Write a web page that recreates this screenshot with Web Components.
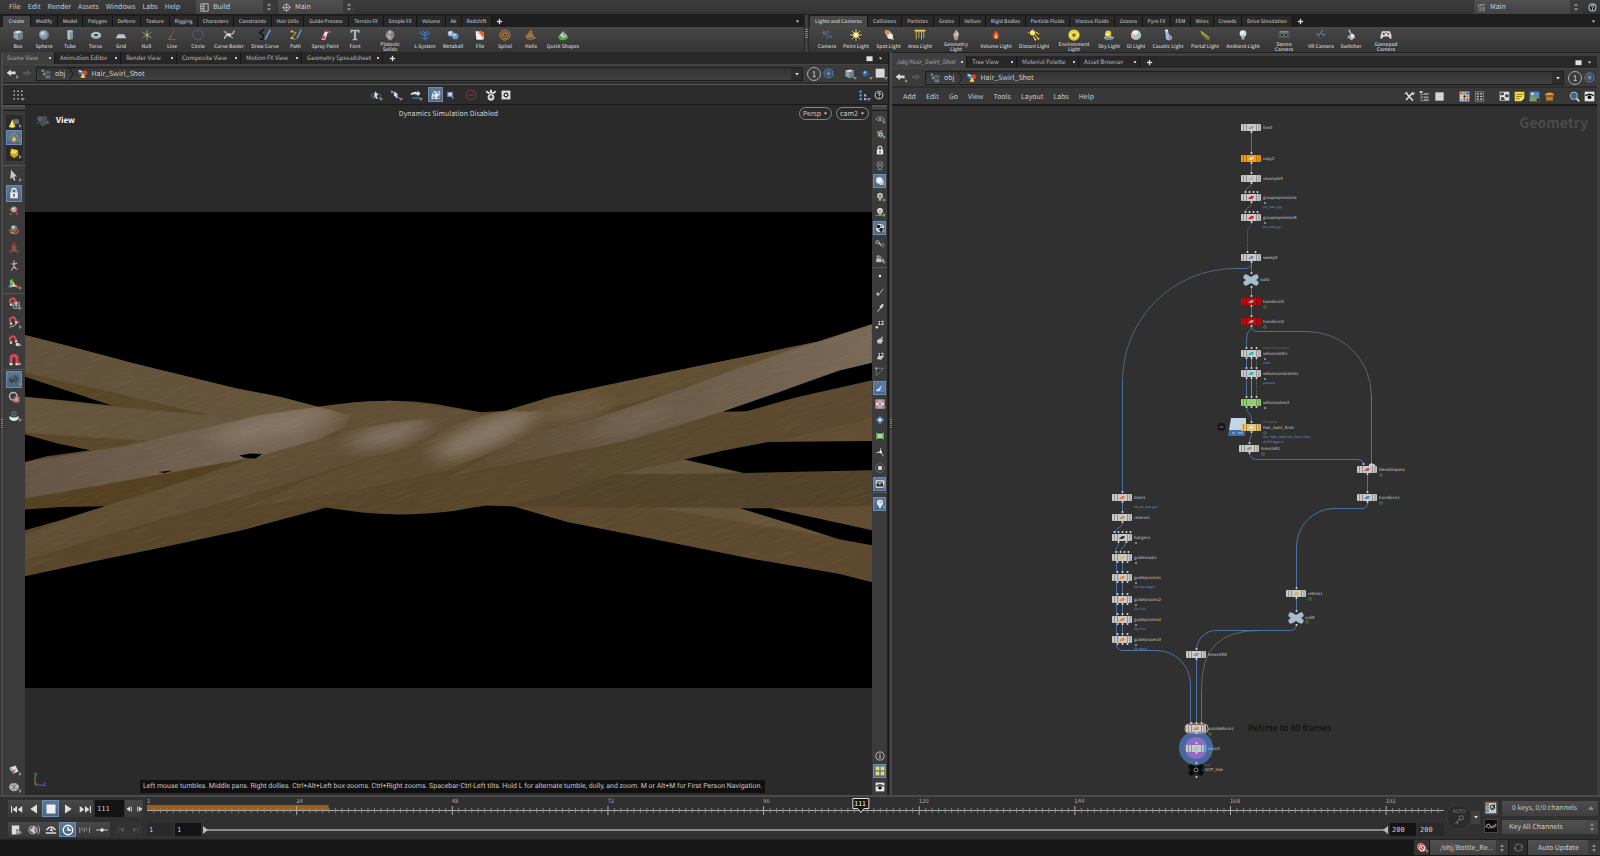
<!DOCTYPE html>
<html lang="en">
<head>
<meta charset="utf-8">
<title>Hair_Swirl_Shot</title>
<style>
html,body{margin:0;height:100%;background:#181818}
body{display:flex;flex-direction:column;font:7px/10px "Noto Sans CJK JP","Noto Sans",sans-serif;color:#c8c8c8;overflow:hidden;text-rendering:geometricPrecision}
main{flex:1;min-height:0;display:grid;grid-template-columns:3px 886fr 3px 708fr;grid-template-rows:100%;background:#4a4a4a}
.shelves{display:grid;grid-template-columns:804fr 5px 791fr;height:37px;flex:none}
</style>
</head>
<body>
<app-menu></app-menu>
<div class="shelves">
  <tool-shelf kind="create"></tool-shelf>
  <drag-grip></drag-grip>
  <tool-shelf kind="lights"></tool-shelf>
</div>
<main>
  <drag-grip side></drag-grip>
  <scene-pane></scene-pane>
  <drag-grip side></drag-grip>
  <network-pane></network-pane>
</main>
<play-bar></play-bar>
<status-bar></status-bar>
<script>
const define = (tag, css, html) => customElements.define(tag, class extends HTMLElement {
  constructor() {
    super();
    const root = this.attachShadow({mode: 'open'});
    const t = document.createElement('template');
    t.innerHTML = `<style>*{box-sizing:border-box}button,input,select{font:inherit;color:inherit;text-rendering:inherit;margin:0;border:0;padding:0;background:none;border-radius:0;outline:0}:host{box-sizing:border-box}${css}</style>` + (typeof html === 'function' ? html(this) : html);
    root.append(t.content.cloneNode(true));
  }
});

/* ---------- icons, 16-unit grid ---------- */
const L = (d, c = '#ddd', w = 1.4) => `<path d="${d}" fill="none" stroke="${c}" stroke-width="${w}"/>`;
const P = (d, c = '#ddd') => `<path d="${d}" fill="${c}"/>`;
const C = (x, y, r, c = '#ddd') => `<circle cx="${x}" cy="${y}" r="${r}" fill="${c}"/>`;
const O = (x, y, r, c = '#ddd', w = 1.2) => `<circle cx="${x}" cy="${y}" r="${r}" fill="none" stroke="${c}" stroke-width="${w}"/>`;
const R = (x, y, w, h, c = '#ddd') => `<rect x="${x}" y="${y}" width="${w}" height="${h}" fill="${c}"/>`;
const rays = (c, a = 3.5, b = 7.5, n = 8) => { let s = ''; for (let i = 0; i < n; i++) { const t = i * 2 * Math.PI / n; s += `M${8 + a * Math.cos(t)} ${8 + a * Math.sin(t)}L${8 + b * Math.cos(t)} ${8 + b * Math.sin(t)}`; } return L(s, c, 1.3); };
const magnet = `<g transform="rotate(-15 6 6)">` + L('M3 10V5q0-3 3.500-3T10 5v5', '#cf4a50', 3) + R(1.500, 8.500, 3, 2.500) + R(8.500, 8.500, 3, 2.500) + '</g>';
const cam = P('M1 8l4-4 3 1 4-2 2 5-3 5-7 0z', '#252d31') + C(4.500, 5.500, 2.600, '#4b575d') + C(10, 5, 2.600, '#3a464b') + O(4.500, 5.500, 2.200, '#77848a', .8) + O(10, 5, 2.200, '#6b777d', .8) + C(8, 10.500, 3, '#39454b') + O(8, 10.500, 2.400, '#66737a', .8) + C(13, 9.500, 2, '#566268') + C(2.500, 10, 1.500, '#444f55');
const bulb = (c, d = '#555') => C(8, 6, 4.5, c) + R(6, 10, 4, 4, '#aaa') + L('M6 6l2 3 2-3', d, .8);
const ICONS = {
  box: P('M2 4l7-2 5 2v9l-6 2-6-3z', '#8ea0ac') + P('M2 4l7-2 5 2-6 2z', '#d6e0e6') + P('M8 6l6-2v9l-6 2z', '#6d7f8b'),
  sphere: C(8, 8, 6.6, '#6f8391') + C(7, 7, 5, '#8fa1ad') + C(6, 5.5, 2.6, '#c5d2da'),
  tube: P('M4 3v10q4 3 8 0V3z', '#7d929f') + P('M5.5 3v11h2V3z', '#b9c8d1') + `<ellipse cx="8" cy="3" rx="4" ry="1.6" fill="#a6bac6"/>`,
  torus: `<ellipse cx="8" cy="8.5" rx="7" ry="4.8" fill="#8ea2af"/><ellipse cx="8" cy="7.6" rx="6" ry="3.4" fill="#b6c4cd"/><ellipse cx="8" cy="8" rx="3" ry="1.5" fill="#34393d"/>`,
  grid: P('M4 7h8l3 5H1z', '#bfc4c9') + P('M1 12h14v1H1z', '#6d7479'),
  null: L('M8 1v14', '#3ea34b', 1.8) + L('M2 4l12 8', '#d4573a', 1.8) + L('M2 12l12-8', '#3b76c4', 1.8) + C(8, 8, 2, '#dda13a'),
  line: L('M3 14L12 1', '#9a4040', 1.4) + L('M3 14h10', '#6b7076', 1) + L('M4 14A7 7 0 0 0 7 9', '#6b7076', 1),
  circle: O(8, 8, 6.6, '#4f6a8a', 1.2),
  bezier: L('M1 3L13 12', '#8fb4e0', 1.4) + L('M2 13q2-7 7-6t6-5', '#ddd', 1.5) + R(6, 6, 4, 4, '#d5dbe2') + C(3, 4, 1.5, '#d97a3a'),
  draw: L('M1 13q5 2 5-2T2 6t5-5', '#151515', 2) + L('M15 1L8 14', '#5b9be0', 2.2),
  path: L('M2 3l6 2-6 7 5 2', '#b6a53c', 1.4) + L('M15 1L9 13', '#5b9be0', 2) + R(1, 2, 2.5, 2.5, '#e6d23e') + R(1, 11, 2.5, 2.5, '#e6d23e'),
  spray: P('M8 3l4 1-4 11-5-1z', '#e3e3e3') + P('M5 8l4 2-2 4-4-1z', '#d5454c') + P('M9 1l3 1v2l-4-1z', '#b8393f') + C(14, 4, 1.4, '#e26a6a'),
  font: P('M2 1h12v4h-1.500l-1-2H9.500v10l2 1v1h-7v-1l2-1V3H4.500l-1 2H2z', '#a9bac6'),
  platonic: P('M8 1l5 3 1 5-4 6H6L2 9l1-5z', '#8d8d8d') + P('M8 1l2 6H5zM3 10l5-2 1 5z', '#c5c5c5') + L('M3 4l10 5M13 4L4 12', '#6c6c6c', .8),
  lsystem: L('M8 15V4M8 10L3 6M8 10l5-4M8 7L5 2M8 7l3-5M3 6H1M3 6V3M13 6h2M13 6V3M8 13l-5-1M8 13l5-1', '#3674c0', 1.5),
  metaball: C(5, 6, 3.8, '#9cb7dc') + C(11, 9.500, 4.2, '#6f97cf') + C(4, 5, 1.6, '#e6eef8') + C(10, 8, 1.6, '#d5e2f4') + L('M7 7l2 1', '#9cb7dc', 2.5),
  file: P('M2 3h5l1 2h5v9H3z', '#e8e3da') + P('M8 2l6 3-2 6-5-4z', '#e8662b') + P('M3 7h6l2 7H4z', '#f6f2ec'),
  spiral: O(8, 8, 6.8, '#c5813f', 1.2) + O(8, 8.400, 4.600, '#c5813f', 1.2) + O(8, 8, 2.300, '#c5813f', 1.2),
  helix: L('M8 1l-1.500 3q3 2 3-.5-4-1-5 3 2 3 6 .5-6-2-9 2 3 4 10 .5Q4 7 1 11q4 5 13 1-5-3-12-1', '#c5813f', 1.2),
  quick: P('M3 9l5-6 5 5v4H4z', '#c4c9c4') + P('M1 10l4-1 3 3 6-3 1 3-5 3H4z', '#4dae30') + P('M8 3l5 5-5 1z', '#8e948e'),
  camera: cam,
  point: rays('#ebcf4d', 4, 7.8) + C(8, 8, 3.600, '#fff2a8'),
  spot: P('M3 5l5-3 5 5-2 6-5-1z', '#b9b9b9') + C(5, 4, 3, '#e08a3a') + C(10, 10, 3.400, '#eee') + P('M11 9l4 5h-4z', '#f0da58'),
  area: R(1, 1, 14, 2.500, '#f1d565') + L('M3 4v10M6.500 4v8M10 4v10M13 4v8', '#d8b649', 1.2),
  geolight: P('M8 1l4 6-2 8H6L4 7z', '#a98cab') + C(8, 8, 2.600, '#f0b95d') + P('M8 1l4 6H9z', '#d8d3da'),
  volume: P('M4 2h8l2 4-1 8H3L2 6z', '#5b3c3c') + P('M8 2q5 5 3 10-3 3-6 0Q3 8 8 2z', '#e5532b') + P('M8 6q3 4 1 7-3 0-3-3z', '#f8c14a'),
  distant: C(6, 5, 3.400, '#ffe873') + L('M9 7l5 6M7 9l3 6M10 4l5 3M2 5H0M6 1V0', '#e8c440', 1.4) + C(14, 13, 1.300, '#f5d65a') + C(10, 14, 1.200, '#f5d65a'),
  environment: C(8, 8, 7.500, '#e9ce3a') + L('M2 8q6-6 12 0-6 6-12 0z', '#fff7c9', 1.2) + C(8, 8, 2.500, '#867322'),
  sky: C(7, 6, 4, '#ecd04c') + P('M1 12q1-4 5-2 3-4 6 0 3 0 3 2-3 3-7 2-5 1-7-2z', '#c9a53e') + P('M1 12h14q-3 3-7 2-5 1-7-2z', '#4f92b4') + P('M2 8l4-2 2 3z', '#fff'),
  gi: C(8, 8, 6.800, '#b9c8bb') + C(7, 6, 4, '#efe9e7') + C(11, 9, 3, '#a5cbb4') + C(5, 10, 3, '#d4b7bb'),
  caustic: P('M4 1h4l1 6 4 3q2 3-2 5-7 1-6-6z', '#a9b9dc') + P('M4 1h4v2H4z', '#e9eefb') + P('M8 9l5 2q1 3-3 4z', '#7f93c2'),
  portal: P('M2 2l12 9v4l-4-1L3 7z', '#76801f') + P('M2 2l12 9v1L3 5z', '#b9b947'),
  ambient: bulb('#c9dfe6', '#9fb9c4') + C(6.500, 4.500, 2, '#f3fbff'),
  stereo: R(1, 4, 14, 8, '#53575a') + C(5, 8, 3, '#22282b') + C(11, 8, 3, '#22282b') + O(5, 8, 2.300, '#aaa', .8) + O(11, 8, 2.300, '#aaa', .8) + R(2, 3, 12, 1.500, '#9ea3a6'),
  vr: P('M1 9l7-4 6 4-6 4z', '#47545b') + L('M2 6q5 4 11 1M10 1l-4 8', '#6f93ad', 1.3) + C(8, 9, 2, '#2a3235'),
  switcher: L('M5 1l4 7', '#ccc', 1.800) + P('M4 9l6-2 4 4-5 4-5-3z', '#b8b8b8') + C(10, 9, 2.600, '#e6e6e6') + C(5, 11, 2, '#8e8e8e'),
  gamepad: P('M3 3h10q3 4 2.500 9-2 3-4-2h-7q-2 5-4 2Q0 7 3 3z', '#dcdcdc') + C(5, 6.500, 1.600, '#555') + C(11, 6.500, 1.600, '#b3542c') + R(7, 4, 2, 1.500, '#777'),
  back: P('M1 7l6-5v3h7v4H7v3z', '#d9d9d9'), fwd: P('M15 7L9 2v3H3v4h6v3z', '#555'),
  obj: R(1, 1, 4, 4, '#7e8a8f') + R(7, 3, 8, 5, '#56646b') + R(3, 6, 4, 4, '#8b979c') + R(7, 10, 8, 5, '#66757c') + L('M3 4v9h4', '#444', 1),
  geo: P('M1 1l6 2v7L1 8z', '#4277b5') + C(11, 6, 4, '#d34131') + P('M8 6l4 7q-4 3-8 0z', '#f1c93b') + P('M1 1l6 2V6L1 4z', '#c6d5e8'),
  one: O(8, 8, 7.400, '#bbb', 1) + L('M6.500 6L8.300 5v6M6.500 11h3.600', '#ccc', 1),
  target: O(8, 8, 6.500, '#5480b8', 1.500) + O(8, 8, 3.700, '#5480b8', 1.300) + C(8, 8, 1.800, '#8bb2e2'),
  ball: C(8, 8, 4.500, '#2d62aa') + C(7, 6.500, 1.800, '#9dc0ec'),
  square: R(1, 1, 13, 13, '#d8d8d8'), help: C(8, 8, 7, '#d5dde0') + C(8, 8, 5.500, '#22282b') + L('M6 6.500Q6 4.500 8 4.500t2 2Q10 8 8 8.500V10M8 11v1.500', '#eee', 1.500),
  dots: [2, 7, 12].map(y => [2, 7, 12].map(x => R(x, y, 2, 2, '#bbb')).join('')).join(''),
  tumble: `<ellipse cx="8" cy="9" rx="6.500" ry="3" fill="none" stroke="#4f79ad" stroke-width="1.300"/>` + P('M7 3l4 5-2 1 1 4-2 0-1-3-2 1z', '#ddd'),
  pan: L('M2 3l11 10', '#4f79ad', 1.800) + P('M6 3l5 5-2 .5 1 3.500-2 0-1-3-2 1z', '#ddd') + P('M1 2l4 1-3 3z', '#7fa6d6'),
  dolly: P('M1 6q6-4 9-1V2l4 4-4 4V8Q6 6 1 8z', '#ddd') + L('M3 12h11', '#4f79ad', 1.800),
  orbit: P('M3 6l3-4 3 2 4-2 1 5-2 2 1 4-4 1-3-1-4 1 0-4z', '#cfd6dc') + C(6, 6, 1.500, '#6b7f93') + C(11, 5, 1.200, '#6b7f93') + C(5, 11, 1.200, '#6b7f93') + C(11, 11, 1.500, '#6b7f93') + L('M8 6v5M6 8h5', '#fff', 1),
  focus: R(2, 3, 9, 8, '#7f93b3') + R(4, 5, 5, 4, '#dde7f6') + P('M9 9l4 5-3-1z', '#bbb'),
  stop: O(8, 8, 6.500, '#713a3a', 1.500) + R(4.500, 6.500, 7, 3, '#633'),
  fan: C(8, 11, 4.500, '#dcdcdc') + C(8, 10.500, 2.200, '#46525a') + P('M6.500 6h3V1h-3zM5 7L1 4l1-2 5 3zM11 7l4-3-1-2-5 3z', '#ddd'),
  render: R(1, 1, 14, 14, '#e2e2e2') + rays('#222', 2.500, 5, 8) + O(8, 8, 2.800, '#222', 1.500),
  bars: R(2, 2, 3, 3, '#7295c4') + R(2, 7, 3, 3, '#7295c4') + R(2, 12, 3, 3, '#7295c4') + R(8, 7, 3, 3, '#9db4d3') + R(8, 12, 3, 3, '#9db4d3') + R(13, 12, 2, 3, '#9db4d3'),
  cone: P('M6 3l4 10q-4 3-9 0z', '#f0c83b') + C(11, 6, 3.800, '#6a6f72') + P('M6 3l1 10H3z', '#fbe48a'),
  geos: L('M8 1L1 8l7 6 7-6zM4 5l8 7M12 5l-8 7', '#b4a05a', 1) + P('M8 6l3 4-3 3-3-3z', '#e9c349'),
  comp: P('M4 2l9 2 1 7-6 4-5-4z', '#c9a518') + P('M5 3l8 2-4 5-6-2z', '#f4d84a'),
  cursor: P('M4 1l8 9H8l2 5-2 .5L6 11l-3 2.500z', '#c9c9c9'),
  lock: R(3, 7, 10, 8, '#ececec') + L('M5 7V5q0-3 3-3t3 3v2', '#ececec', 1.700) + R(7, 9, 2, 4, '#555'),
  move: C(8, 6, 4, '#98a4aa') + P('M1 13l4-3 1 3zM15 12l-4-3-1 4zM1 6l3-2v4zM14 5l-3-1v3z', '#d23c30') + C(7, 5, 1.500, '#dde4e8'),
  rot: C(8, 7, 4.500, '#6d7d88') + C(7, 5.500, 2, '#c1cfd8') + L('M2 8q0 6 6 6t6-5', '#d24a2c', 2) + L('M4 12l5 2', '#e8962c', 1.500),
  scale: R(5, 5, 6, 8, '#5c676d') + P('M8 0l2.500 4h-5zM1 14l3-4 1 4zM15 14l-3-4-1 4z', '#cf3328') + L('M8 4v7', '#cf3328', 1.500),
  pose: L('M8 3v6M5 5l3 1 4-2M8 9l-4 5M8 9l4 4', '#bbb', 1.500) + C(8, 2, 1.500, '#d66') + C(5, 5, 1.300, '#c44') + C(12, 12, 1.300, '#c44'),
  handle: P('M2 3l4-2 2 5-4 2z', '#4bb24c') + P('M7 5l4 6H5z', '#ecd24a') + P('M11 8l4 4-4 2z', '#d9333b') + C(3, 11, 2.300, '#3f7cc8') + L('M4 4v7h8', '#eee', 1),
  snapgrid: L('M7 7h8v8H7zM11 7v8M7 11h8', '#bbb', 1) + magnet, snapcurve: L('M2 15q6 0 13-8', '#bbb', 1.200) + magnet,
  snappoint: C(12.500, 12.500, 2.300, '#ddd') + magnet,
  magnet: L('M4 13V6q0-4 4-4t4 4v7', '#d3474c', 4) + R(2, 12, 4, 3) + R(10, 12, 4, 3),
  cam, ring: O(7, 7, 5, '#bbb', 1.800) + L('M8 8h7v7H8zM9 15l6-7', '#d66', 1) + R(9, 9, 5, 5, '#c9a0a0'),
  bowl: C(8, 5, 4, '#4a5254') + O(8, 5, 3, '#777', .8) + P('M2 8q6 4 12 0v4q-6 5-12 0z', '#dfeaea'),
  cloth: P('M2 5l8-3 4 8-7 3z', '#d9dde0') + P('M4 10l6-3-2 6z', '#a9672f') + P('M2 5l4 1 1 4-4-1z', '#92a9b8'),
  disc: `<ellipse cx="8" cy="8" rx="6.500" ry="5.500" fill="#b9b9b9"/>` + L('M3 5l10 6M12 4L4 12M8 3v10', '#666', .9),
  eyeoff: L('M1 8q7-7 14 0-7 6-14 0z', '#8b9aa0', 1.300) + C(8, 8, 2.500, '#7d8d94'),
  geoeye: P('M3 4l8-2 3 6-3 6-7-2z', '#5b7f5b') + C(9, 9, 3, '#c5cfc5') + C(9, 9, 1.300, '#333') + L('M3 4l5 2 3-4', '#a9c3a4', 1),
  bulboff: L('M8 1q5 0 5 5-1 4-3 5v3H6v-3Q3 8 3 5q1-4 5-4zM5 4l6 5M11 4L5 9', '#9da4a8', 1.200),
  spheres: C(10, 10, 4.500, '#ccc') + C(7, 7, 5.500, '#f1f1f1') + O(7, 7, 5, '#98a3ac', .9),
  bulb: bulb('#e9e3a2') + L('M8 3v6M5 6h6', '#675', 1.500), bulb2: bulb('#f0f0d6') + L('M1 14q7-4 14 0M8 3v5M5.500 6h5', '#999', 1.300),
  checkball: C(8, 8, 6.500, '#e6e6e6') + P('M3 3h5v5H2zM8 8h6l-3 6H8z', '#222') + P('M4 9h4v4zM9 3l3 2-3 2z', '#555'),
  link: O(4, 5, 2.500, '#bbb', 1.500) + L('M6 6l4 4', '#bbb', 2) + O(12, 10, 2.500, '#999', 1.300),
  cameras: R(2, 7, 8, 6, '#c3c3c3') + C(5, 4, 2.500, '#999') + C(9, 5, 2, '#777') + P('M10 9l4-2v6l-4-1z', '#aaa'),
  dot: C(8, 8, 2, '#eee'), norm: L('M13 3L8 10', '#ddd', 1.200) + C(5, 11, 2, '#ccc') + L('M3 8v5h5', '#9bb', 1), vec: P('M12 1L7 6l3 3 4-6z', '#ddd') + L('M9 8l-5 6', '#ddd', 1.500),
  ptnum: C(3, 13, 2, '#ddd') + `<text x="4" y="10" font-size="9" font-weight="700" fill="#ddd">12</text>`,
  prim: P('M3 9l5-4 5 3-3 6-6-1z', '#c9c9c9') + P('M9 5l3-3v4z', '#eee'),
  primnum: P('M3 11l4-3 6 1-3 5-6-1z', '#c9c9c9') + `<text x="4" y="9" font-size="9" font-weight="700" fill="#ddd">12</text>`,
  hull: L('M2 14V2h12M2 14L14 2', '#698a80', 1.200) + C(2, 2, 1.500, '#bbb'), slope: P('M2 13q-1-4 3-4l6-6q4 4 3 10z', '#c2d2e2') + P('M11 3q4 4 3 10H8z', '#4b7bb5'),
  uv: R(1, 1, 14, 14, '#e8dcdc') + P('M1 1h5v5H1zM10 1h5v5h-5zM6 6h4v4H6zM1 10h5v5H1zM10 10h5v5h-5z', '#c98080') + P('M6 1h4v5H6zM6 10h4v5H6z', '#94b6d4'),
  diamond: P('M8 1l7 7-7 7-7-7z', '#4f76a5') + P('M8 4l4 4-4 3-4-3z', '#cdd9e6'),
  green: P('M2 2l3 2h6l3-2v12l-3-2H5l-3 2z', '#6dc24e') + R(5, 5, 6, 6, '#d9f0cf') + R(7, 7, 2, 2, '#444'),
  axes: L('M9 8V2M9 8L2 9M9 8l4 6', '#ddd', 1.400) + C(9, 8, 2, '#fff'), sqring: O(8, 8, 7, '#777', 1.200) + R(5, 5, 6, 6, '#ddd'),
  image: R(1, 2, 14, 12, '#e3e3e3') + P('M2 9q3-6 5 0l5-4 2 7H2z', '#333') + R(3, 4, 9, 2, '#556'),
  pin: C(8, 6, 5, '#dfe8f1') + P('M4 8h8l-4 8z', '#dfe8f1') + C(9, 5, 2, '#a7bdd2'),
  info: O(8, 8, 6.500, '#bbb', 1.500) + L('M8 7v5M8 4v1.500', '#ddd', 1.700), quad: [1, 9].map(y => [1, 9].map(x => R(x, y, 6, 6, '#e5dc6e')).join('')).join(''),
  eyebox: R(1, 1, 14, 14, '#e6e6e6') + L('M2 7q6-5 12 0', '#111', 2) + C(8, 9, 2.800, '#111'),
  tools: L('M4 4l9 10M13 2L3 13', '#ddd', 2.200) + L('M1 3l3 1 0-3M12 5l2 0 1-3', '#ddd', 1.500), tree: L('M3 2v12h4M3 9h4M3 5h4', '#8d9a8d', 1.300) + R(7, 3, 7, 2.500, '#9c9c9c') + R(7, 8, 7, 2.500, '#9c9c9c') + R(7, 12, 7, 2.500, '#9c9c9c') + R(1, 0, 4, 3, '#ccc'),
  list: R(2, 2, 12, 12, '#ddd') + L('M2 5h12M2 8h12M2 11h12', '#bcbcbc', .8),
  colors: R(1, 1, 14, 14, '#eee') + ['#d22', '#2a2', '#22b', '#dc2', '#111', '#e60', '#2bc', '#b2b', '#555'].map((c, i) => R(2 + i % 3 * 4.400, 2 + (i / 3 | 0) * 4.400, 3.200, 3.200, c)).join(''),
  grid6: L('M2 1h12v14H2z', '#999', 1) + [3, 7, 11].map(y => R(4, y, 3, 2, '#ccc') + R(9, y, 3, 2, '#ccc')).join(''),
  netbox: R(1, 1, 14, 13, '#dcdcdc') + P('M2 2h5v4H2zM9 5h5v4H9zM3 9h5v4H3z', '#39424a') + L('M5 6l6 6', '#fff', 1),
  note: P('M1 1h14v9l-5 5H1z', '#f3dc3e') + L('M3 5h10M3 8h8M3 11h5', '#87761a', 1.200) + P('M10 15v-5h5z', '#fff6b0'),
  photo: R(1, 1, 14, 14, '#4e8bd0') + P('M1 11l5-4 4 4 3-3 2 2v5H1z', '#8a9a48') + C(5, 4, 2, '#f3e38a') + C(13, 13, 2, '#222'),
  bread: P('M2 4q6-4 12 0v3H2z', '#dd9a45') + R(3, 8, 10, 6, '#c17c2c') + R(1, 6, 14, 2, '#8d5718'),
  search: O(7, 7, 5, '#9fb7c8', 1.800) + C(7, 7, 3.500, '#4d6a7d') + L('M11 11l4 4', '#ddd', 2.500), clap: R(2, 7, 12, 8, '#777') + P('M1 3l12-2 1 3L2 6z', '#999') + L('M4 2l1 3M8 2l1 3M11 1l1 3M4 7v8M8 7v8', '#444', 1),
  layout: L('M1.500 1.500h13v13h-13zM7 1.500v13M7 6h-5.500M7 10h-5.500', '#ccc', 1.500), cross: O(8, 8, 5.500, '#ccc', 1.200) + P('M8 0l2 4H6zM8 16l2-4H6zM0 8l4-2v4zM16 8l-4-2v4z', '#ccc') + C(8, 8, 2),
  first: P('M8 4v9L2 8.500zM15 4v9L9 8.500z') + R(0, 4, 1.500, 9), prev: P('M12 2v12L3 8z'), halt: R(2, 2, 12, 12, '#eee'), play: P('M4 2v12l9-6z'), last: P('M1 4v9l6-4.500zM8 4v9l6-4.500z') + R(14.500, 4, 1.500, 9),
  stepb: P('M8 3v10L1 8z') + R(9.500, 3, 2, 10), stepf: P('M8 3v10l7-5z') + R(4.500, 3, 2, 10), sheet: P('M1 2h10v12H1z', '#ddd') + P('M8 6l7 6-7 3z', '#eee') + L('M8 7l6 5-4 0 1 3-3 0z', '#222', 1),
  audio: O(6, 8, 5, '#aaa', 1.400) + P('M3 6h2l4-4v12l-4-4H3z', '#ccc') + L('M11 4q3 4 0 8M13 2q5 6 0 12', '#9fc0d6', 1.200), loop: L('M2 8q6-8 12 0', '#ddd', 1.800) + L('M1 12h14', '#ddd', 2) + P('M9 5l2 5-5-1z'),
  clock: O(8, 8, 6.300, '#fff', 1.800) + L('M8 4v4h4', '#fff', 1.700), ticks: L('M1 4v8M4 5v4M7 5v6M10 5v4M14 4v8', '#999', 1.200), keyslide: L('M0 8h16', '#ccc', 1.300) + P('M8 5l3 3-3 3-3-3z'),
  kprev: L('M3 4v9', '#3f5a35', 1.500) + P('M12 4v9L5 8.500z', '#555'), knext: L('M13 4v9', '#3f5a35', 1.500) + P('M4 4v9l7-4.500z', '#555'),
  chans: R(1, 1, 14, 14, '#c9c9c9') + R(2, 2, 3, 3, '#c33') + R(2, 6, 3, 3, '#3a3') + R(2, 10, 3, 3, '#36c') + O(10, 7, 3, '#222', 1.300) + L('M9 11l4-8', '#222', 1.300),
  anim: R(0, 0, 16, 16, '#0c0c0c') + L('M1 10q3-8 6-2t8-3', '#c98a35', 1.500) + L('M1 7q4 6 8 2t6 0', '#4a84c5', 1.500), autokey: O(10.500, 5.500, 3, '#6a6a6a', 1.500) + L('M8.500 7.500L2 14M4 12l2 2', '#6a6a6a', 1.800),
  error: C(7, 7, 5.500, '#999') + C(9, 9, 6, '#d0433f') + O(9, 9, 4, '#fff', 1.400) + L('M6 6l6 6', '#fff', 1.400), refresh: L('M3 8q0-5 5-5t5 4M13 8q0 5-5 5T3 9', '#676767', 1.600) + P('M15 5l-1 4-4-2zM1 11l1-4 4 2z', '#676767'),
  plus: R(6.500, 2, 3, 12, '#e2e2e2') + R(2, 6.500, 12, 3, '#e2e2e2'),
  down: P('M3 5h10l-5 7z', '#ddd'), max: R(1, 3, 14, 11, '#e0e0e0'), updown: P('M8 0l4 6H4zM8 16l4-6H4z', '#8a8a8a')
};
define('ui-icon', ':host{display:block;width:var(--icon,11px);height:var(--icon,11px);flex:none}svg{display:block;width:100%;height:100%;overflow:visible}', el => `<svg viewBox="0 0 16 16" aria-hidden="true">${ICONS[el.getAttribute('name')] || ''}</svg>`);

/* square icon button with an optional pop-up corner mark */
define('icon-button', `:host{display:block;flex:none;position:relative;width:var(--w,15px);height:var(--h,15px)}
button{width:100%;height:100%;display:flex;align-items:center;justify-content:center;background:var(--face,none)}
:host([on]) button{background:linear-gradient(#5c7a9c,#4b6582);box-shadow:inset 0 0 0 1px #6c8cae}
:host([menu])::after{content:"";position:absolute;right:0;bottom:2px;border:2px solid transparent;border-left:3px solid #8a8a8a;border-right:0}
:host([drop])::after{content:"";position:absolute;right:0;bottom:1px;border:2px solid transparent;border-top:3px solid #8a8a8a;border-bottom:0}`,
  el => `<button type="button" aria-label="${el.getAttribute('name')}"><ui-icon name="${el.getAttribute('name')}"></ui-icon></button>`);
const ib = (name, attrs = '') => `<icon-button name="${name}" ${attrs}></icon-button>`;

define('drag-grip', `:host{display:flex;align-items:center;justify-content:center;background:linear-gradient(90deg,#222,#484848,#222)}
:host([side]){background:#4a4a4a;border-left:1px solid #333}i{width:3px;height:10px;background:repeating-linear-gradient(#888 0 1px,#333 1px 2px)}`, '<i></i>');

define('pick-list', `:host{display:flex;height:var(--ph,14px)}
label{flex:1;display:flex;align-items:center;gap:4px;padding-left:var(--pl,4px);background:linear-gradient(#505050,#434343);min-width:0}
select{appearance:none;flex:1;height:100%;min-width:0;font-size:7px;line-height:10px;color:#ccc;text-overflow:ellipsis}
select option{background:#333}
span{width:12px;display:flex;align-items:center;justify-content:center;background:var(--arrows,#3a3a3a);--icon:8px}`,
  el => `<label>${el.hasAttribute('icon') ? `<ui-icon name="${el.getAttribute('icon')}"></ui-icon>` : ''}<select aria-label="${el.getAttribute('label')}"><option>${el.getAttribute('value')}</option></select></label><span><ui-icon name="updown"></ui-icon></span>`);

define('app-menu', `:host{display:flex;flex:none;align-items:center;height:15px;padding-left:9px;background:linear-gradient(#3c3c3c,#333);border-bottom:1px solid #1c1c1c;--icon:9px}
nav{display:flex;gap:7px;width:187px;flex:none}button{line-height:14px}pick-list{width:79px;margin-right:3px}.sp{flex:1}.desk{width:108px;--pl:3px}pick-list[icon=cross]{width:77px}`,
  `<nav>${['File', 'Edit', 'Render', 'Assets', 'Windows', 'Labs', 'Help'].map(t => `<button>${t}</button>`).join('')}</nav>
  <pick-list icon="layout" label="Desktop" value="Build"></pick-list><pick-list icon="cross" label="Radial menu" value="Main"></pick-list><span class="sp"></span>
  <pick-list class="desk" icon="clap" label="Take" value="Main"></pick-list>${ib('help')}`);

/* ---------- shelves ---------- */
define('shelf-tab', `:host{display:block;flex:none}button{width:100%;height:11px;font-size:5px;font-weight:500;line-height:10px;color:#b8b8b8;background:#292929;border-right:1px solid #141414;white-space:nowrap}
:host([on]) button{background:#464646;color:#ccc}`, '<button type="button"><slot></slot></button>');
define('shelf-tool', `:host{display:block;flex:none}button{width:100%;height:25px;display:flex;flex-direction:column;align-items:center;font-size:5px;font-weight:500;line-height:5px;color:#ccc;position:relative}
ui-icon{--icon:12px;margin-top:2px}span{flex:1;display:flex;align-items:center;white-space:pre;text-align:center}`,
  el => `<button type="button"><ui-icon name="${el.getAttribute('icon')}"></ui-icon><span><slot></slot></span></button>`);
const SHELVES = {
  create: {pad: 3, inset: 5,
    tabs: 'Create 28|Modify 27|Model 25|Polygon 30|Deform 28|Texture 29|Rigging 28|Characters 36|Constraints 38|Hair Utils 32|Guide Process 45|Terrain FX 35|Simple FX 33|Volume 29|Ak 16|Redshift 30',
    tools: 'box Box 26|sphere Sphere 26|tube Tube 26|torus Torus 25|grid Grid 26|null Null 25|line Line 26|circle Circle 26|bezier Curve Bezier 36|draw Draw Curve 36|path Path 25|spray Spray Paint 34|font Font 26|platonic Platonic/Solids 44|lsystem L-System 26|metaball Metaball 30|file File 24|spiral Spiral 26|helix Helix 26|quick Quick Shapes 38'},
  lights: {pad: 1, inset: 1,
    tabs: 'Lights and Cameras 58|Collisions 34|Particles 32|Grains 26|Vellum 26|Rigid Bodies 40|Particle Fluids 44|Viscous Fluids 45|Oceans 28|Pyro FX 28|FEM 20|Wires 23|Crowds 28|Drive Simulation 51',
    tools: 'camera Camera 26|point Point Light 32|spot Spot Light 33|area Area Light 30|geolight Geometry/Light 42|volume Volume Light 38|distant Distant Light 38|environment Environment/Light 42|sky Sky Light 28|gi GI Light 26|caustic Caustic Light 38|portal Portal Light 36|ambient Ambient Light 40|stereo Stereo/Camera 42|vr VR Camera 32|switcher Switcher 28|gamepad Gamepad/Camera 42'}
};
define('tool-shelf', `:host{display:flex;flex-direction:column;background:#1e1e1e;min-width:0}
.tabs{display:flex;height:12px;align-items:flex-end;--icon:7px;--w:14px;--h:11px;overflow:hidden;flex:none}.tabs b{flex:1}
.tools{display:flex;flex:1;background:linear-gradient(#474747,#343434);border-bottom:1px solid #1a1a1a;overflow:hidden}`, el => {
  const s = SHELVES[el.getAttribute('kind')];
  const cut = t => [t.slice(0, t.lastIndexOf(' ')), t.slice(t.lastIndexOf(' ') + 1)];
  const inset = s.inset === 1 ? 5 : s.inset;
  return `<style>.tabs{padding-left:${s.pad}px}.tools{padding-left:${inset}px}</style><div class="tabs">${s.tabs.split('|').map((t, i) => { const [n, w] = cut(t); return `<shelf-tab style="width:${w}px"${i ? '' : ' on'}>${n}</shelf-tab>`; }).join('')}${ib('plus')}<b></b>${ib('down', 'style="--icon:5px"')}</div>
  <div class="tools">${s.tools.split('|').map(t => { const [n, w] = cut(t), k = n.indexOf(' '); return `<shelf-tool icon="${n.slice(0, k)}" style="width:${w}px">${n.slice(k + 1).replace('/', '\n')}</shelf-tool>`; }).join('')}</div>`;
});

/* ---------- pane chrome ---------- */
define('pane-tab', `:host{display:block;flex:none}button{width:100%;height:12px;display:flex;align-items:center;justify-content:space-between;padding:0 3px 0 5px;font-size:6px;line-height:10px;color:#bcbcbc;background:#272727;border-right:1px solid #161616;white-space:nowrap}
:host([on]) button{background:#3f3f3f;padding-left:4px;color:#aaa}i{width:2px;height:2px;background:#ccc}:host([it]) button{font-style:italic}`, '<button type="button"><slot></slot><i></i></button>');
define('pane-tabs', ':host{display:flex;height:12px;flex:none;background:#282828;--icon:7px;--w:18px;--h:12px}b{flex:1}.r{--w:11px;margin-right:2px;display:flex}', `<slot></slot>${ib('plus')}<b></b><span class="r">${ib('max')}${ib('down', 'style="--icon:5px"')}</span>`);
define('path-bar', `:host{display:flex;align-items:center;height:20px;flex:none;background:#3b3b3b;border-top:1px solid #464646;border-bottom:2px solid #2c2c2c;padding-left:1px;gap:0}
.f{flex:1;height:14px;display:flex;align-items:center;border:1px solid #1d1d1d;background:linear-gradient(#343434,#404040);margin:0 3px 0 2px;padding-left:4px;--icon:10px;min-width:0}
a{display:flex;align-items:center;gap:4px;color:#ccc;text-decoration:none}.ch{width:6px;height:14px;margin:0 4px 0 2px}
.dd{margin-left:auto;--w:11px;--h:12px;--face:#2c2c2c;--icon:6px}.n{--icon:14px}`,
  `${ib('back', 'menu')}${ib('fwd')}<div class="f"><a href="#obj"><ui-icon name="obj"></ui-icon>obj</a><svg class="ch" viewBox="0 0 6 14"><path d="M1 0l4 7-4 7" fill="none" stroke="#1b1b1b"/></svg><a href="#geo"><ui-icon name="geo"></ui-icon>Hair_Swirl_Shot</a>${ib('down', 'class="dd"')}</div>${ib('one', 'class="n"')}${ib('target')}<slot></slot>`);

/* ---------- 3D view ---------- */
const HAIR = () => {
  const g = (pts, c) => `<polygon points="${pts}" fill="${c}"/>`;
  const glow = (x, y, rx, ry, a, c, o, clip) => `<g clip-path="url(#${clip})"><ellipse cx="${x}" cy="${y}" rx="${rx}" ry="${ry}" fill="${c}" opacity="${o}" filter="url(#b2)" transform="rotate(${a} ${x} ${y})"/></g>`;
  const sil = 'M0 105L90 142 200 190 390 265 470 290 540 320Q660 288 760 312L840 336 885 332 970 290 1190 215 1460 125 1561 72V845L1500 820 1340 775 1140 710 1000 665 900 618 850 615 790 632Q700 650 620 637L555 622 400 690 250 742 150 775 0 828Z';
  const s1 = '-20,490 190,435 350,375 430,345 540,320 600,345 590,380 545,415 430,468 230,528 -20,600';
  const s2 = '-20,715 145,618 300,540 480,442 620,382 700,362 850,336 810,365 760,395 700,448 620,480 400,590 200,680 -20,790';
  const s3 = '400,625 520,540 620,482 700,448 760,395 830,350 885,332 970,290 1120,290 1060,348 950,390 900,430 780,508 640,560';
  const s4 = '1580,62 1580,185 1500,212 1285,338 1100,425 900,490 780,530 870,450 940,395 1060,350 1200,272 1400,155';
  return `<svg viewBox="0 0 846 476" preserveAspectRatio="none" role="img" aria-label="Rendered hair strands"><defs>
  <clipPath id="c"><path d="${sil}"/></clipPath>
  ${[s1, s2, s3, s4].map((s, i) => `<clipPath id="k${i + 1}"><polygon points="${s}"/></clipPath>`).join('')}
  <filter id="b" x="-5%" y="-5%" width="110%" height="110%"><feGaussianBlur stdDeviation="2 2"/></filter>
  <filter id="b2" x="-50%" y="-80%" width="200%" height="260%"><feGaussianBlur stdDeviation="24 20"/></filter>
  <filter id="t" x="0" y="0" width="100%" height="100%"><feTurbulence type="fractalNoise" baseFrequency=".015 .3" numOctaves="4" seed="4"/><feColorMatrix values="0 0 0 0 .85  0 0 0 0 .8  0 0 0 0 .75  0 0 0 3 -1.4"/></filter>
  <linearGradient id="br" x1="0" x2="1"><stop offset="0" stop-color="#665543"/><stop offset=".5" stop-color="#705f4f"/><stop offset=".85" stop-color="#766553"/><stop offset="1" stop-color="#67543b"/></linearGradient>
  <linearGradient id="tr" x1="0" x2="1"><stop offset="0" stop-color="#5d4a2f"/><stop offset=".4" stop-color="#695744"/><stop offset="1" stop-color="#7a6a59"/></linearGradient>
  <linearGradient id="tl" x1="0" x2="1"><stop offset="0" stop-color="#62513b"/><stop offset="1" stop-color="#67553c"/></linearGradient>
  <linearGradient id="g2" x1="0" x2="1" y1="0" y2="1"><stop offset="0" stop-color="#66553c"/><stop offset="1" stop-color="#5a482d"/></linearGradient>
  <linearGradient id="r2" x1="0" x2="1"><stop offset="0" stop-color="#57452a"/><stop offset="1" stop-color="#5c4b31"/></linearGradient></defs>
  <rect width="846" height="476" fill="#000"/>
  <g transform="scale(.542 .33333) translate(0 264)">
  <g clip-path="url(#c)"><rect y="0" width="1561" height="900" fill="#58462b"/>
  <g filter="url(#b)">
  ${g('-20,95 200,185 390,260 540,315 560,360 340,352 150,272 -20,212', 'url(#tl)')}${g('0,217 340,345 160,325 0,235', '#594628')}
  ${g('-20,285 160,318 340,345 400,355 230,425 60,405 -20,395', '#65543e')}${g('0,403 60,407 230,422 120,452', '#5a4729')}
  ${g('540,320 660,295 840,336 720,362 590,420 560,360', '#604f35')}
  ${g('0,595 230,528 400,470 300,545 145,620 -20,632', '#544121')}
  ${g(s2, 'url(#g2)')}${glow(670, 402, 80, 30, -28, '#88776a', .9, 'k2')}
  ${g(s1, 'url(#br)')}${glow(460, 375, 130, 38, -22, '#8b7968', .8, 'k1')}
  ${g(s3, '#5e4c31')}${glow(850, 400, 120, 38, -38, '#8a7969', .95, 'k3')}${glow(1010, 325, 60, 18, -22, '#7a6957', .7, 'k3')}
  ${g('885,332 970,288 1190,212 1470,118 1350,190 1120,310 1000,335', '#614f31')}
  ${glow(1020, 320, 70, 22, -22, '#766553', .7, 'c')}
  ${g(s4, 'url(#tr)')}${glow(1120, 360, 90, 24, -30, '#7d6d5c', .7, 'k4')}
  ${g('1580,235 1420,292 1330,333 1285,335 1100,428 900,494 780,533 620,585 560,622 900,620 1100,520 1215,478 1370,425 1580,345', 'url(#r2)')}
  ${g('1580,345 1370,428 1580,424', '#624e30')}${g('1090,522 1215,476 1325,520', '#64543b')}
  ${g('1090,522 1325,518 1580,510 1580,620 900,618', '#534229')}
  ${g('900,620 1160,622 1500,712 1580,735 1580,860 1340,780 1000,670', '#5d4a2f')}${g('1160,622 1320,624 1500,714', '#655439')}${g('1370,624 1580,616 1580,695', '#624e30')}
  </g>
  <g transform="rotate(-30 780 450)"><rect x="-200" y="-400" width="2000" height="1800" filter="url(#t)" opacity=".05"/></g></g>
  ${g('0,230 60,262 160,316 80,302 0,290', '#000')}${g('0,403 60,430 120,450 40,468 0,485', '#000')}${g('0,628 70,620 147,618 60,662 0,690', '#000')}${g('395,466 415,460 437,461 425,475 405,473', '#000')}${g('245,515 272,511 258,518', '#000')}
  ${g('1285,335 1400,270 1500,212 1561,188 1561,240 1420,292 1330,333', '#000')}${g('1215,478 1290,450 1370,425 1561,422 1561,510 1325,518', '#000')}${g('1318,624 1375,624 1561,690 1561,735 1500,717 1410,670', '#000')}
  </g></svg>`;
};
define('scene-view', `:host{display:flex;flex:1;min-width:0;align-items:center;position:relative;background:#2a2a2a}
.r{width:100%;aspect-ratio:16/9}.r svg{display:block;width:100%;height:100%}
.top,.view,.cams,.tip,.ax{position:absolute}.top{top:4px;left:0;right:0;text-align:center;color:#d0d0d0}
.view{left:11px;top:9px;display:flex;align-items:center;gap:6px;font-size:8px;line-height:14px;font-weight:700;color:#fff;--icon:14px}
.cams{right:3px;top:2px;display:flex;gap:4px}.cams button{border:1px solid #888;border-radius:7px;height:13px;width:33px;display:flex;align-items:center;justify-content:center;gap:2px;--icon:5px}
.tip{bottom:2px;left:115px;padding:0 3px;height:13px;line-height:13px;background:#101010;color:#c4c4c4;white-space:nowrap;font-family:Roboto,sans-serif}
.ax{left:8px;bottom:6px;width:16px;height:20px}`,
  `<div class="r">${HAIR()}</div><div class="top">Dynamics Simulation Disabled</div><div class="view"><ui-icon name="cam"></ui-icon>View</div>
  <div class="cams"><button>Persp<ui-icon name="down"></ui-icon></button><button>cam2<ui-icon name="down"></ui-icon></button></div>
  <svg class="ax" viewBox="0 0 16 20"><path d="M2 16V8" stroke="#56a556"/><path d="M2 16h8" stroke="#5a5ad0"/><text x="1" y="7" font-size="6" fill="#66c066">y</text><text x="2" y="16" font-size="5" fill="#c05050">x</text><text x="10" y="17" font-size="6" fill="#7a7af0">z</text></svg>
  <div class="tip">Left mouse tumbles. Middle pans. Right dollies. Ctrl+Alt+Left box-zooms. Ctrl+Right zooms. Spacebar-Ctrl-Left tilts. Hold L for alternate tumble, dolly, and zoom. M or Alt+M for First Person Navigation.</div>`);

const group = (h, items) => `<div class="g" style="height:${h}px">${items.split(' ').map(s => { const on = s.includes('*'), m = s.includes('>'); return ib(s.replace(/[*>]/g, ''), (on ? 'on ' : '') + (m ? 'menu' : '')); }).join('')}</div>`;
define('side-bar', `:host{display:flex;flex-direction:column;flex:none;align-items:center;background:#3b3b3b}
.h{align-self:stretch;height:6px;flex:none;background:linear-gradient(#555,#3a3a3a);border-bottom:1px solid #1a1a1a}
.g{display:flex;flex-direction:column;align-items:center;justify-content:space-around;width:100%;flex:none}.g+.g{border-top:1px solid #555}.g:last-child{border:0}b{flex:1}
:host([left]){width:22px;--w:16px;--h:17px;--icon:12px}:host([right]){width:16px;--w:13px;--h:14px;--icon:10px;border-right:1px solid #222}
.g.modes{background:#2b2b2b;--h:15px;width:17px;margin:4px 0}`,
  el => el.hasAttribute('left')
    ? `<div class="h"></div>${group(46, 'cone> geos*> comp>').replace('class="g"', 'class="g modes"')}${group(128, 'cursor> lock* move rot scale pose handle>')}${group(76, 'snapgrid> snapcurve> snappoint> magnet>')}${group(56, 'cam*> ring bowl>')}<b></b>${group(34, 'cloth> disc>')}`
    : `<div class="h"></div>${group(156, 'eyeoff> geoeye> lock bulboff spheres*> bulb> bulb2> checkball*> link cameras>')}${group(225, 'dot norm vec ptnum prim primnum hull slope* uv> diamond green axes sqring image*>')}${group(22, 'pin*>')}<b></b>${group(47, 'info quad* eyebox')}`);

define('scene-pane', `:host{display:flex;flex-direction:column;min-width:0;border-right:1px solid #1b1b1b;background:#2b2b2b}
.bar{display:flex;height:21px;flex:none;align-items:center;justify-content:space-between;background:#2c2c2c;border-top:1px solid #555;border-bottom:1px solid #191919;padding:0 2px 0 7px;--icon:12px}
.bar span{display:flex}.bar .mid{gap:5px}.view{display:flex;flex:1;min-height:0}`,
  `<pane-tabs>${['Scene View 52', 'Animation Editor 66', 'Render View 56', 'Composite View 64', 'Motion FX View 61', 'Geometry Spreadsheet 81'].map((t, i) => { const k = t.lastIndexOf(' '); return `<pane-tab style="width:${t.slice(k + 1)}px"${i ? '' : ' on'}>${t.slice(0, k)}</pane-tab>`; }).join('')}</pane-tabs>
  <path-bar><span style="width:6px"></span>${ib('box', 'drop')}${ib('ball', 'drop style="--w:16px"')}${ib('square', 'drop')}</path-bar>
  <div class="bar"><span>${ib('dots', 'drop')}</span><span class="mid">${ib('tumble', 'drop')}${ib('pan', 'drop')}${ib('dolly', 'drop')}<span>${ib('orbit', 'on')}${ib('focus', 'style="--icon:10px"')}</span>${ib('stop')}<span>${ib('fan')}${ib('render', 'style="--icon:10px"')}</span></span><span>${ib('bars', 'drop')}${ib('help', 'style="--icon:10px"')}</span></div>
  <div class="view"><side-bar left></side-bar><scene-view></scene-view><side-bar right></side-bar></div>`);

/* ---------- node graph ---------- */
const NODES = [ // x, y, label, colour, inputs, outputs, note, badge, mark colour
  [1251, 127, 'line2', '', 0, 1, '', 0, '#a99'], [1251, 158, 'copy2', '#f59b0c', 1, 1, '', 0, '#cdd'], [1251, 178, 'resample3', '', 1, 1, '', 0, '#c9a9a9'],
  [1251, 197, 'groupexpression5', '', 4, 1, 'pin_start_grp', 1, '#c22'], [1251, 217, 'groupexpression6', '', 4, 1, 'pin_end_grp', 1, '#c22'], [1251, 257, 'sweep3', '', 2, 1, '', 0, '#78a'],
  [1251, 301, 'transform3', '#c20909', 1, 1, '', 2, '#a9b'], [1251, 321, 'transform2', '#c20909', 1, 1, '', 2, '#a9b'],
  [1251, 353, 'vellumcloth1', '', 3, 3, 'cloth', 1, '#2bb'], [1251, 373, 'vellumconstraints1', '', 3, 3, 'pressure', 1, '#2bb'], [1251, 402, 'vellumsolver2', '#8fd66b', 3, 3, '', 1, '#d99'],
  [1251, 427, 'Hair_Swirl_Knot', '#e8c46c', 1, 1, '', 2, '#ddd'], [1249, 448, 'timeshift1', '', 1, 1, '', 2, '#a88'], [1367, 469, 'blendshapes1', '', 2, 1, '', 2, '#b55'], [1367, 497, 'transform1', '', 1, 1, '', 2, '#48c'],
  [1122, 497, 'blast1', '', 1, 1, 'not pin_end_grp', 0, '#d98040'], [1122, 517, 'reverse1', '', 1, 1, '', 0, '#b96'], [1122, 537, 'hairgen1', '', 5, 2, '', 1, '#432'], [1122, 557, 'guidemask1', '', 4, 3, '', 1, '#cb7'],
  [1122, 577, 'guideprocess1', '', 3, 3, 'Op: Set Length', 1, '#d84'], [1122, 599, 'guideprocess2', '', 3, 3, 'Op: Frizz', 1, '#d84'], [1122, 619, 'guideprocess4', '', 3, 3, 'Op: Frizz', 1, '#d84'], [1122, 639, 'guideprocess3', '', 3, 3, 'Op: Wave', 1, '#d84'],
  [1296, 593, 'retime1', '', 1, 1, '', 2, '#cb5'], [1196, 654, 'timeshift2', '', 1, 1, '', 0, '#a88'], [1196, 728, 'pointdeform1', '', 3, 1, '', 2, '#d83'], [1196, 748, 'color2', '', 1, 1, '', 2, '#9bc']];
const GRAPH = () => {
  const B = '#4a71a6', w = (d, c = B, x = '') => `<path d="${d}" fill="none" stroke="${c}" stroke-width="1" ${x}/>`, dash = 'stroke-dasharray="1 1"';
  const v = (x, a, b, c, d) => w(`M${x} ${a}V${b}`, c, d);
  let s = v(1251.5, 131, 154) + v(1251.5, 162, 174) + w('M1251.500 182C1251.500 190 1245.500 185 1245.500 193') + w('M1251.500 202C1251.500 210 1245.500 205 1245.500 213') + w('M1251.500 223C1251.500 229 1247.500 225 1247.500 233V252', B, dash)
    + v(1251.5, 262, 273) + w('M1251.500 263Q1251 268 1246 268.500H1234') + w('M1235 268.500A112.500 112.500 0 0 0 1122.500 381', '#53657a') + v(1122.5, 380, 493)
    + v(1251.5, 287, 297) + v(1251.5, 305, 317) + w('M1251.500 326Q1251 331 1248 332 1246.500 334 1246.500 349M1251.500 326Q1252 331 1257 331.500H1308') + w('M1307 331.500A64.500 64.500 0 0 1 1371.500 396', '#5b6672') + v(1371.5, 395, 465);
  for (const [a, b] of [[357, 369], [377, 398]]) s += v(1246.5, a, b) + v(1251.5, a, b, '#c35ec4') + v(1256.5, a, b, B, dash);
  s += w('M1246.500 406C1246.500 415 1251.500 411 1251.500 422') + w('M1251.500 432C1251.500 440 1249.500 436 1249.500 444') + w('M1249.500 453Q1250 459 1256 459.500H1358Q1363 459.500 1363.500 465') + v(1367.5, 474, 493)
    + w('M1367.500 503Q1367 508.500 1362 508.500H1334A38 38 0 0 0 1296.500 546V589') + v(1296.5, 598, 611) + w('M1260 630.500Q1230 630 1215 645 1201.500 658 1201.500 690V724', '#606468') + w('M1296.500 624Q1296 630.500 1290 630.500H1216A19.500 19.500 0 0 0 1196.500 650')
    + v(1196.5, 658, 724) + v(1201.5, 690, 724) + w('M1116.500 645Q1117 650.500 1123 650.500H1156A34 34 0 0 1 1190.500 685V724') + v(1122.5, 502, 513) + w('M1122.500 522C1122.500 530 1115.500 526 1115.500 533') + w('M1118.500 542C1118.500 548 1115.500 546 1115.500 553M1125.500 542C1125.500 550 1120.500 545 1120.500 553');
  for (const [a, b] of [[561, 573], [581, 596], [604, 616], [624, 636]]) s += v(1116.5, a, b) + v(1122.5, a, b);
  const ports = (n, x, y) => { let o = ''; for (let i = 0; i < n; i++) o += `<circle cx="${x + .5 + (i - (n - 1) / 2) * (n === 2 ? 8 : n === 3 ? 5 : 4)}" cy="${y}" r="1" fill="#ddd"/>`; return o; };
  s += `<circle cx="1196" cy="748" r="17" fill="#44689f"/><circle cx="1196" cy="748" r="11" fill="#8f6cc4"/><rect x="1185" y="724" width="23" height="9" rx="4" fill="none" stroke="#d9a08e"/>
  <path d="M1231 418h15v12h-17z" fill="#c3d6e8"/><path d="M1229 430h16v6h-17z" fill="#3f6ea6"/><path d="M1232 433h3M1238 433h5" stroke="#a9c6e6"/><circle cx="1221.500" cy="427" r="4" fill="#161616"/><path d="M1219.500 427h4" stroke="#777"/>`;
  for (const [x, y, t, c, i, o, note, badge, mk] of NODES) {
    s += ports(i, x, y - 5) + ports(o, x, y + 5) + `<rect x="${x - 10}" y="${y - 3}" width="20" height="7" rx="1" fill="${c || '#c9c9c9'}"/><path d="M${x - 7.5} ${y - 3}v7M${x - 4.5} ${y - 3}v7M${x + 5.5} ${y - 3}v7M${x + 8} ${y - 3}v7" stroke="#000" stroke-opacity=".28"/><path d="M${x - 3} ${y + 2}l3-3h2l1 1-2 2z" fill="${mk}"/>`
      + `<text class="n" x="${x + 12}" y="${y + 2}">${t}</text>` + (badge === 1 ? `<rect x="${x + 13}" y="${y + 5}" width="2" height="2" fill="#7a8a80"/>` : badge ? `<circle cx="${x + 14}" cy="${y + 6}" r="1.400" fill="none" stroke="#4f7f38" stroke-width=".8"/>` : '') + (note ? `<text class="b" x="${x + 12}" y="${y + 11}">${note}</text>` : '');
  }
  const nul = (x, y, c, t) => ports(1, x, y - 7) + ports(1, x, y + 7) + `<path d="M${x - 5} ${y - 3}l10 6M${x + 5} ${y - 3}l-10 6" stroke="${c}" stroke-width="5" stroke-linecap="round"/><rect x="${x - 3}" y="${y - 3}" width="6" height="6" fill="${c}"/><text class="n" x="${x + 9}" y="${y + 1}">${t}</text>`;
  s += nul(1251, 280, '#a5bccd', 'null5') + nul(1296, 618, '#a5bccd', 'null6') + nul(1196, 770, '#0a0a0a', 'OUT_Hair') + `<circle cx="1196" cy="770" r="2" fill="none" stroke="#aaa" stroke-width=".8"/><circle cx="1307" cy="622" r="1.400" fill="none" stroke="#4f7f38" stroke-width=".8"/><rect x="1204" y="745" width="2" height="7" fill="#2ab5e8"/>
  <text class="g" x="1263" y="349">Vellum Constraints</text><text class="g" x="1263" y="423">File Cache</text><text class="g" x="1205" y="766">Null</text><text class="b" x="1263" y="438">Hair_R&amp;D_v0001.Hair_Swirl_Knot_</text><text class="b" x="1263" y="443">v0.$F4.bgeo.sc</text><path d="M1369 466v-2h5l2 2z" fill="#ccc"/>
  <text x="1248" y="731" font-size="9" fill="#0c0c0c">Retime to 80 frames</text>`;
  return `<svg width="100%" height="100%"><g transform="translate(-892 -106)">${s}</g></svg>`;
};
define('node-graph', `:host{display:block;flex:1;min-height:0;position:relative;background:#303030;border-top:1px solid #171717;overflow:hidden}
svg{position:absolute;inset:0}.n{font-size:4px;fill:#ccc}.b{font-size:3px;fill:#6a9fe0}.g{font-size:3px;fill:#777}
h2{position:absolute;right:9px;top:7px;margin:0;font-size:14px;line-height:20px;font-weight:700;color:#4b4b4b}`, () => GRAPH() + '<h2>Geometry</h2>');

define('network-pane', `:host{display:flex;flex-direction:column;min-width:0;padding:3px 3px 0 0;background:#3f3f3f;border-top:1px solid #222}
.m{display:flex;align-items:center;height:17px;flex:none;background:#383838;border-bottom:1px solid #1a1a1a;padding:1px 0 0 8px}
nav{display:flex;gap:10px;margin-left:3px}b{flex:1}.m span{display:flex}.m .s{width:10px}`,
  `<pane-tabs><pane-tab on it style="width:75px">/obj/Hair_Swirl_Shot</pane-tab><pane-tab style="width:50px">Tree View</pane-tab><pane-tab style="width:62px">Material Palette</pane-tab><pane-tab style="width:61px">Asset Browser</pane-tab></pane-tabs>
  <path-bar></path-bar><div class="m"><nav>${['Add', 'Edit', 'Go', 'View', 'Tools', 'Layout', 'Labs', 'Help'].map(t => `<button>${t}</button>`).join('')}</nav><b></b>
  <span>${ib('tools')}${ib('tree')}${ib('list')}<i class="s"></i>${ib('colors')}${ib('grid6')}<i class="s"></i>${ib('netbox')}${ib('note')}${ib('photo')}${ib('bread')}<i class="s"></i>${ib('search')}${ib('eyebox')}</span></div><node-graph></node-graph>`);

/* ---------- playbar ---------- */
const RULER = () => {
  const p = f => ((f - 1) / 2).toFixed(2) + '%';
  let s = `<rect x="0" y="8" width="14%" height="5" fill="#a35c14"/><rect y="13" width="100%" height="1" fill="#aaa"/>`;
  for (let f = 1; f <= 200; f++) { const M = f % 24 === 0; if (f > 1) s += `<rect x="${p(f)}" y="${M ? 9 : 11}" width="1" height="${M ? 9 : 5}" fill="${M ? '#aaa' : '#858585'}"/>`; if (M || f === 1) s += `<text x="${p(f)}" y="6">${f}</text>`; }
  return `<svg width="100%" height="24">${s}<svg x="${p(111)}" y="0" overflow="visible"><path d="M-7.500 1.500h16v10h-5l-3 4-3-4h-5z" fill="#151515" stroke="#ddd"/><text x="-6" y="9" class="now">111</text></svg></svg>`;
};
define('play-bar', `:host{display:flex;flex:none;height:45px;background:#303030;border-top:2px solid #4a4a4a;border-bottom:1px solid #222;padding-left:8px}
.l{width:139px;flex:none;display:flex;flex-direction:column;gap:5px;padding-top:3px}.l div{display:flex}
.a{--w:17px;--h:17px;--face:linear-gradient(#484848,#383838);--icon:12px}.b{--w:17px;--h:15px;--face:linear-gradient(#484848,#383838);--icon:12px}
input{background:#131313;color:#ccc;font:7px/10px "DejaVu Sans Mono",monospace}.a input{width:29px;margin:0 1px 0 2px;padding-left:2px}.a .st{--w:9px;--icon:8px}.b .d{--w:14px;--face:#333;--icon:9px}
.t{flex:1;min-width:0;display:flex;flex-direction:column}svg{display:block;overflow:visible}text{font-size:6px;fill:#aaa}.now{font-size:7px;fill:#fff}
.r{display:flex;align-items:center;height:15px;margin-top:1px}.r input{width:26px;height:13px;padding-left:2px}.r .dim{background:#292929}.r input+input{margin-left:2px}
.rng{flex:1;height:2px;margin:0 2px;background:#888;position:relative}.rng:before,.rng:after{content:"";position:absolute;top:-3px;border:4px solid transparent}.rng:before{left:0;border-left:5px solid #bbb;border-right:0}.rng:after{right:0;border-right:5px solid #bbb;border-left:0}
.k{width:156px;flex:none;display:flex;align-items:center;padding:0 0 2px 2px}.auto{width:24px;height:24px;border-radius:50%;background:#2b2b2b;box-shadow:0 0 0 1px #3b3b3b;font-size:5px;line-height:5px;color:#777;display:flex;flex-direction:column;align-items:center;justify-content:center;margin-left:1px;--icon:11px}
.ic{display:flex;flex-direction:column;gap:4px;margin:0 4px;--w:14px;--h:14px;--face:#454545;--icon:12px}.dd{--w:9px;--h:13px;--face:#3f3f3f;--icon:6px}
.c{flex:1;display:flex;flex-direction:column;gap:4px;margin-right:2px}.c>button{height:15px;background:linear-gradient(#4c4c4c,#3f3f3f);color:#c4c4c4;display:flex;align-items:center;justify-content:space-between;padding:0 4px 0 10px}.c pick-list{--pl:7px;--arrows:#484848}.c i{border:3px solid transparent;border-top:0;border-bottom:4px solid #888}`,
  `<div class="l"><div class="a">${ib('first')}${ib('prev')}${ib('halt', 'on')}${ib('play')}${ib('last')}<input aria-label="Current frame" value="111">${ib('stepb', 'class="st"')}${ib('stepf', 'class="st"')}</div>
  <div class="b">${ib('sheet')}${ib('audio')}${ib('loop')}${ib('clock', 'on')}${ib('ticks')}${ib('keyslide')}<i style="width:4px"></i>${ib('kprev', 'class="d"')}${ib('knext', 'class="d"')}</div></div>
  <div class="t">${RULER()}<div class="r"><input class="dim" aria-label="Global start" value="1"><input aria-label="Range start" value="1"><div class="rng"></div><input aria-label="Range end" value="200"><input class="dim" aria-label="Global end" value="200"></div></div>
  <div class="k"><button class="auto">AUTO<ui-icon name="autokey"></ui-icon></button>${ib('down', 'class="dd"')}<div class="ic">${ib('chans')}${ib('anim')}</div><div class="c"><button>0 keys, 0/0 channels<i></i></button><pick-list label="Key scope" value="Key All Channels"></pick-list></div></div>`);

define('status-bar', `:host{display:flex;flex:none;height:16px;align-items:center;justify-content:flex-end;background:#181818;gap:1px;--ph:15px;padding-bottom:1px}
pick-list{--pl:10px;width:78px}.u{width:72px}.e{--face:#333}.f{--face:#2b2b2b}`, `${ib('error', 'class="e" menu')}<pick-list label="Simulation" value="/obj/Bottle_Re..."></pick-list>${ib('refresh', 'class="f" style="--w:18px"')}<pick-list class="u" label="Update mode" value="Auto Update"></pick-list>`);
</script>
</body>
</html>
